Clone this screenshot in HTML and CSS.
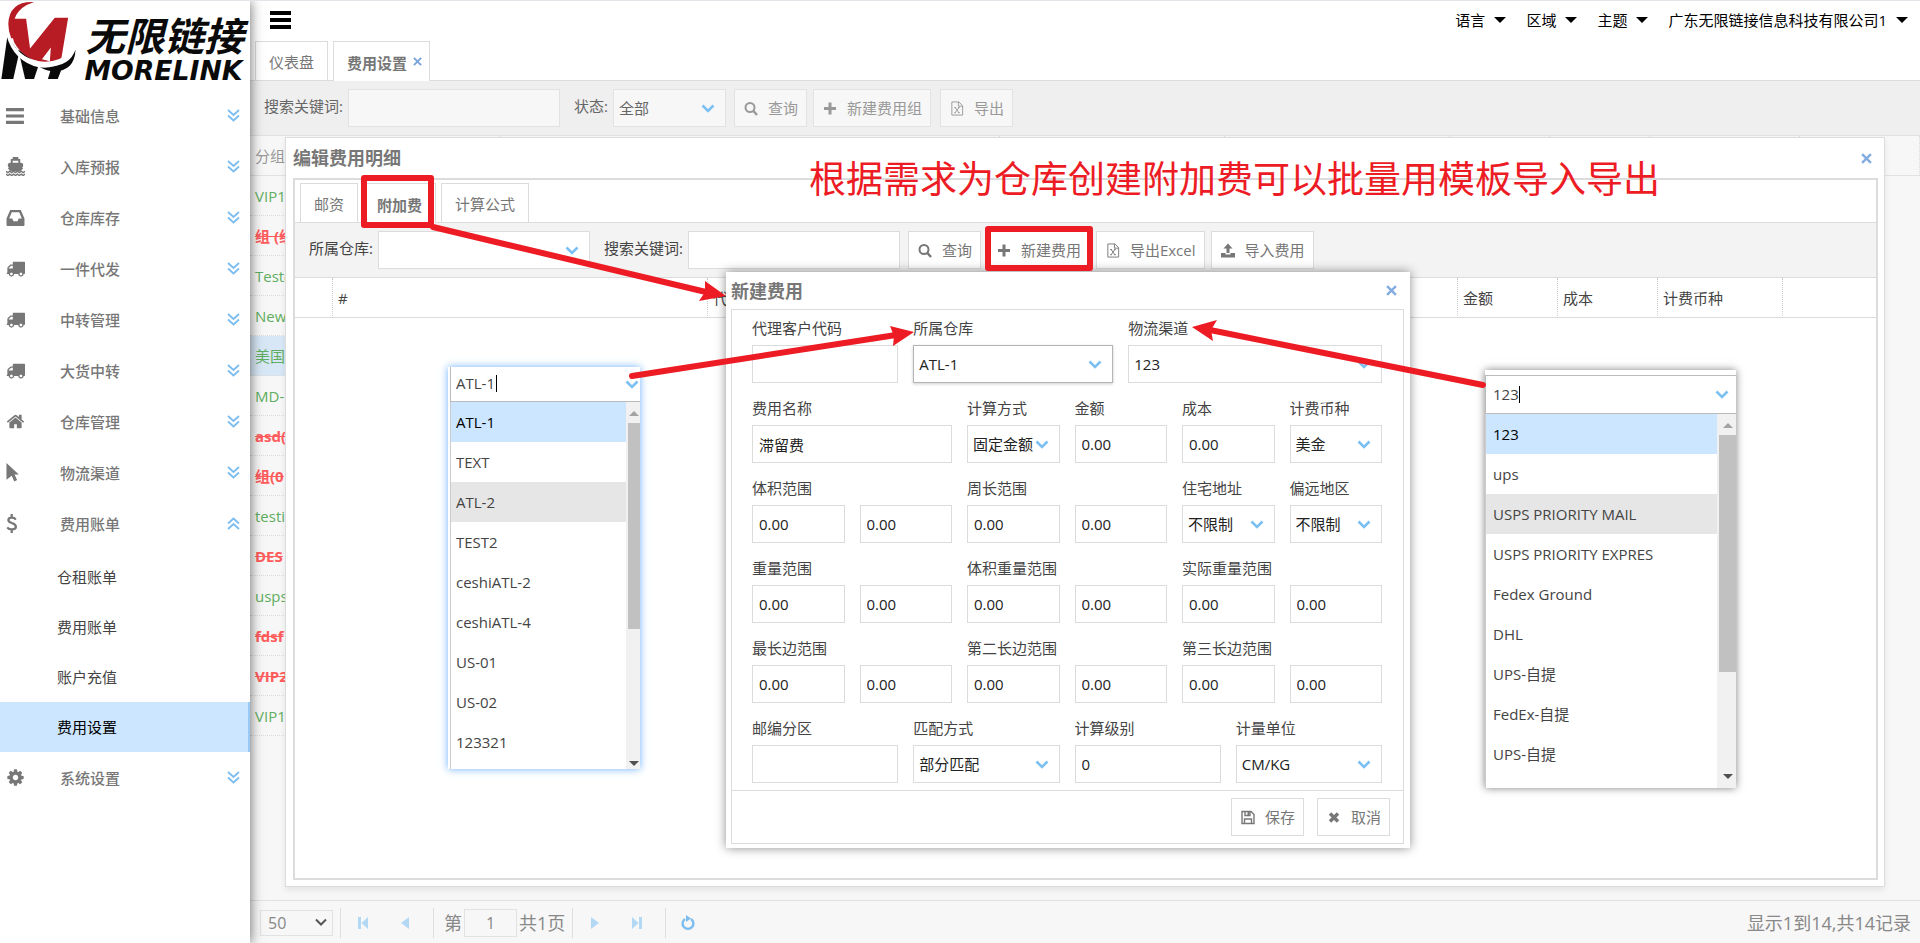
FILE: index.html
```html
<!DOCTYPE html>
<html lang="zh-CN">
<head>
    <meta charset="UTF-8">
    <meta name="viewport" content="width=device-width, initial-scale=1.0">
    <title>费用设置</title>
    <link rel="stylesheet" href="styles.css">
</head>
<body>
    <!-- Icon set -->
    <svg class="sprite" aria-hidden="true">
        <symbol id="i-bars" viewBox="0 0 18 18"><path d="M0 2h17v3H0zM0 8h17v3H0zM0 14h17v3H0z"/></symbol>
        <symbol id="i-ship" viewBox="0 0 20 20"><path d="M7 2V0h6v2h2v4h1l2 1v3l-1 1 1 1-3 3H5l-3-3 1-1-1-1V7l2-1h1V2zm0 2v2h6V4z"/><path d="M0 15l2 1.500 2-1.500 2 1.500 2-1.500 2 1.500 2-1.500 2 1.500 2-1.500 2 1.500 2-1.500M0 18l2 1.500 2-1.500 2 1.500 2-1.500 2 1.500 2-1.500 2 1.500 2-1.500 2 1.500 2-1.500" fill="none" stroke="currentColor" stroke-width="1.500"/></symbol>
        <symbol id="i-inbox" viewBox="0 0 18 18"><path fill-rule="evenodd" d="M4 2h10l3.500 8v6q0 1-1 1h-15q-1 0-1-1v-6zm1.500 2L3 10h3l1 2.500h4l1-2.500h3l-2.500-6z"/></symbol>
        <symbol id="i-truck" viewBox="0 0 1792 1792"><path d="M640 1408q0-52-38-90t-90-38-90 38-38 90 38 90 90 38 90-38 38-90zm-384-512h384v-256h-158q-13 0-22 9l-195 195q-9 9-9 22v30zm1280 512q0-52-38-90t-90-38-90 38-38 90 38 90 90 38 90-38 38-90zm256-1088v1024q0 15-4 26.500t-13.500 18.500-16.500 11.500-23.500 6-22.500 2-25.500 0-22.500-.5q0 106-75 181t-181 75-181-75-75-181h-384q0 106-75 181t-181 75-181-75-75-181h-64q-3 0-22.500.5t-25.500 0-22.500-2-23.500-6-16.500-11.500-13.500-18.500-4-26.500q0-26 19-45t45-19v-320q0-8-.5-35t0-38 2.500-34.500 6.500-37 14-30.500 22.500-30l198-198q19-19 50.500-32t58.500-13h160v-192q0-26 19-45t45-19h1024q26 0 45 19t19 45z"/></symbol>
        <symbol id="i-home" viewBox="0 0 1792 1792"><path d="M1472 992v480q0 26-19 45t-45 19h-384v-384h-256v384h-384q-26 0-45-19t-19-45v-480q0-1 .5-3t.5-3l575-474 575 474q1 2 1 6zm223-69l-62 74q-8 9-21 11h-3q-13 0-21-7l-692-577-692 577q-12 8-24 7-13-2-21-11l-62-74q-8-10-7-23.500t11-21.500l719-599q32-26 76-26t76 26l244 204v-195q0-14 9-23t23-9h192q14 0 23 9t9 23v408l219 182q10 8 11 21.500t-7 23.500z"/></symbol>
        <symbol id="i-pointer" viewBox="0 0 19 20"><path d="M0 0l13 12H8.500l2.700 6-3 1.500-2.700-6.200L0 17.500z"/></symbol>
        <symbol id="i-dollar" viewBox="0 0 19 20"><path d="M9.800 5.800Q8.500 3.800 5.600 3.800 2 3.800 2 6.300q0 2 3.600 3.200 4.300 1.300 4.300 3.900 0 2.800-4.300 2.800-3.300 0-4.800-2.200M5.500 0v4M5.500 16v4" fill="none" stroke="currentColor" stroke-width="2.400"/></symbol>
        <symbol id="i-cog" viewBox="0 0 1792 1792"><path d="M1152 896q0-106-75-181t-181-75-181 75-75 181 75 181 181 75 181-75 75-181zm512-109v222q0 12-8 23t-20 13l-185 28q-19 54-39 91 35 50 107 138 10 12 10 25t-9 23q-27 37-99 108t-94 71q-12 0-26-9l-138-108q-44 23-91 38-16 136-29 186-7 28-36 28h-222q-14 0-24.500-8.500t-11.500-21.500l-28-184q-49-16-90-37l-141 107q-10 9-25 9-14 0-25-11-126-114-165-168-7-10-7-23 0-12 8-23 15-21 51-66.500t54-70.500q-27-50-41-99l-183-27q-13-2-21-12.500t-8-23.500v-222q0-12 8-23t19-13l186-28q14-46 39-92-40-57-107-138-10-12-10-24 0-10 9-23 26-36 98.500-107.500t94.500-71.500q13 0 26 10l138 107q44-23 91-38 16-136 29-186 7-28 36-28h222q14 0 24.500 8.500t11.500 21.500l28 184q49 16 90 37l142-107q9-9 24-9 13 0 25 10 129 119 165 170 7 8 7 22 0 12-8 23-15 21-51 66.500t-54 70.500q26 50 41 98l183 28q13 2 21 12.500t8 23.500z"/></symbol>
        <symbol id="i-more" viewBox="0 0 13 13"><path d="M1 1l5.500 5L12 1M1 6.500l5.500 5 5.500-5" fill="none" stroke="currentColor" stroke-width="1.800"/></symbol>
        <symbol id="i-x" viewBox="0 0 10 10"><path d="M1 1l8 8M9 1L1 9" fill="none" stroke="currentColor" stroke-width="2.200"/></symbol>
        <symbol id="i-cross" viewBox="0 0 14 14"><path d="M3 3l8 8M11 3l-8 8" fill="none" stroke="currentColor" stroke-width="3.400"/></symbol>
        <symbol id="i-search" viewBox="0 0 14 14"><circle cx="6" cy="6" r="4.500" fill="none" stroke="currentColor" stroke-width="2"/><path d="M9 9l4 4.500" stroke="currentColor" stroke-width="2.400"/></symbol>
        <symbol id="i-plus" viewBox="0 0 14 14"><path d="M5.500 1h3v4.500H13v3H8.500V13h-3V8.500H1v-3h4.500z"/></symbol>
        <symbol id="i-excel" viewBox="0 0 14 16"><path d="M1.500 1h7.500l4 4v10H1.500zM8.500 1v4.500H13M5 7l4 5.500M9 7l-4 5.500M4 7h2M8 7h2M4 12.500h2M8 12.500h2" fill="none" stroke="currentColor"/></symbol>
        <symbol id="i-upload" viewBox="0 0 14 14"><path d="M7 0l4.500 5H8.500v4.500h-3V5h-3zM0 9.500h4.500v1.500h5V9.500H14V14H0z"/></symbol>
        <symbol id="i-save" viewBox="0 0 14 14"><path d="M1 1h9l3 3v9H1zM4 1v4h5V1M3.500 13V8.500h7V13" fill="none" stroke="currentColor" stroke-width="1.400"/><path d="M6.500 1.500h2v3h-2z"/></symbol>
        <symbol id="i-first" viewBox="0 0 12 14"><path d="M1 1h3v12H1zM11 1v12L4.500 7z"/></symbol>
        <symbol id="i-prev" viewBox="0 0 12 14"><path d="M10 1v12L2 7z"/></symbol>
        <symbol id="i-next" viewBox="0 0 12 14"><path d="M2 1v12l8-6z"/></symbol>
        <symbol id="i-last" viewBox="0 0 12 14"><path d="M8 1h3v12H8zM1 1v12l6.500-6z"/></symbol>
        <symbol id="i-reload" viewBox="0 0 16 16"><path d="M5 4a5.400 5.400 0 1 0 6 0" fill="none" stroke="currentColor" stroke-width="2.400"/><path d="M6 0l5 3.500L6 7z"/></symbol>
    </svg>

    <aside class="sidebar">
        <svg class="logo" viewBox="0 0 250 90" role="img" aria-label="MORELINK">
            <path d="M6 36l12 16-6 27H0z" fill="#0a0a0a"/>
            <path d="M17 49l21 15-5 15H24z" fill="#0a0a0a"/>
            <path d="M51 66h11l-5 13H47z" fill="#0a0a0a"/>
            <path d="M36 65q32 5 39-16-1 23-24 22-8-1-15-6z" fill="#0a0a0a"/>
            <path d="M11 18h14l4 30L54 17h13.500L60 62q-34 4-47-20-4-10-2-24z" fill="#b71c25"/>
            <path d="M6 34q9 24 32 28 20 3 36-13-14 20-36 17Q13 60 6 34z" fill="#fff" stroke="#fff" stroke-width="2"/>
            <path d="M41 59l9-12-1 14z" fill="#fff"/>
            <path d="M33 1Q8 0 7 23q0 8 3 15l4-1Q6 10 33 1z" fill="#b71c25"/>
            <text class="logo-cn" x="85" y="51">无限链接</text>
            <text class="logo-en" x="84" y="80">MORELINK</text>
        </svg>
        <nav class="menu">
            <a href="#" class="menu-item"><svg><use href="#i-bars"/></svg><span>基础信息</span><svg class="more"><use href="#i-more"/></svg></a>
            <a href="#" class="menu-item"><svg><use href="#i-ship"/></svg><span>入库预报</span><svg class="more"><use href="#i-more"/></svg></a>
            <a href="#" class="menu-item"><svg><use href="#i-inbox"/></svg><span>仓库库存</span><svg class="more"><use href="#i-more"/></svg></a>
            <a href="#" class="menu-item"><svg><use href="#i-truck"/></svg><span>一件代发</span><svg class="more"><use href="#i-more"/></svg></a>
            <a href="#" class="menu-item"><svg><use href="#i-truck"/></svg><span>中转管理</span><svg class="more"><use href="#i-more"/></svg></a>
            <a href="#" class="menu-item"><svg><use href="#i-truck"/></svg><span>大货中转</span><svg class="more"><use href="#i-more"/></svg></a>
            <a href="#" class="menu-item"><svg><use href="#i-home"/></svg><span>仓库管理</span><svg class="more"><use href="#i-more"/></svg></a>
            <a href="#" class="menu-item"><svg><use href="#i-pointer"/></svg><span>物流渠道</span><svg class="more"><use href="#i-more"/></svg></a>
            <a href="#" class="menu-item open"><svg><use href="#i-dollar"/></svg><span>费用账单</span><svg class="more"><use href="#i-more"/></svg></a>
            <div class="submenu">
                <a href="#">仓租账单</a>
                <a href="#">费用账单</a>
                <a href="#">账户充值</a>
                <a href="#" class="active">费用设置</a>
            </div>
            <a href="#" class="menu-item"><svg><use href="#i-cog"/></svg><span>系统设置</span><svg class="more"><use href="#i-more"/></svg></a>
        </nav>
    </aside>

    <main class="main">
        <header class="topbar">
            <button class="burger" aria-label="菜单"></button>
            <button class="top-menu">语言</button>
            <button class="top-menu">区域</button>
            <button class="top-menu">主题</button>
            <button class="top-menu">广东无限链接信息科技有限公司1</button>
        </header>
        <div class="tabs">
            <button class="tab">仪表盘</button>
            <button class="tab active closable">费用设置<svg><use href="#i-x"/></svg></button>
        </div>
        <div class="toolbar dim">
            <label for="keyword">搜索关键词:</label>
            <input type="text" id="keyword" class="wide">
            <label for="status" class="next">状态:</label>
            <select id="status" class="short"><option>全部</option></select>
            <button class="btn"><svg><use href="#i-search"/></svg>查询</button>
            <button class="btn"><svg><use href="#i-plus"/></svg>新建费用组</button>
            <button class="btn gap"><svg><use href="#i-excel"/></svg>导出</button>
        </div>
        <div class="grid-area">
            <table class="groups">
                <colgroup><col class="c250"><col class="c500"><col class="c225"><col class="c225"><col class="c100"><col class="c100"><col class="c150"><col></colgroup>
                <thead>
                    <tr><th>分组</th><th></th><th></th><th></th><th></th><th></th><th></th><th></th></tr>
                </thead>
                <tbody>
                    <tr><td colspan="7">VIP1</td></tr>
                    <tr class="off"><td colspan="7">组 (组)</td></tr>
                    <tr><td colspan="7">Test(</td></tr>
                    <tr><td colspan="7">New</td></tr>
                    <tr class="selected"><td colspan="7">美国</td></tr>
                    <tr><td colspan="7">MD-</td></tr>
                    <tr class="off"><td colspan="7">asd(</td></tr>
                    <tr class="off"><td colspan="7">组(0</td></tr>
                    <tr><td colspan="7">testi</td></tr>
                    <tr class="off"><td colspan="7">DES</td></tr>
                    <tr><td colspan="7">usps</td></tr>
                    <tr class="off"><td colspan="7">fdsf</td></tr>
                    <tr class="off"><td colspan="7">VIP2</td></tr>
                    <tr><td colspan="7">VIP1</td></tr>
                </tbody>
            </table>
        </div>
        <footer class="pager">
            <select class="page-size" aria-label="每页条数"><option>50</option></select>
            <i class="sep"></i>
            <button aria-label="第一页"><svg><use href="#i-first"/></svg></button>
            <button aria-label="上一页"><svg><use href="#i-prev"/></svg></button>
            <i class="sep"></i>
            <label for="page">第</label>
            <input type="text" id="page" value="1">
            <span>共1页</span>
            <i class="sep"></i>
            <button aria-label="下一页"><svg><use href="#i-next"/></svg></button>
            <button aria-label="最后一页"><svg><use href="#i-last"/></svg></button>
            <i class="sep"></i>
            <button class="reload" aria-label="刷新"><svg><use href="#i-reload"/></svg></button>
            <span class="total">显示1到14,共14记录</span>
        </footer>
    </main>

    <!-- Edit window -->
    <section class="window detail">
        <div class="window-title"><h2>编辑费用明细</h2><button class="close" aria-label="关闭"><svg><use href="#i-x"/></svg></button></div>
        <div class="detail-body">
            <div class="tabs">
                <button class="tab">邮资</button>
                <button class="tab active">附加费</button>
                <button class="tab">计算公式</button>
            </div>
            <div class="toolbar">
                <label for="warehouse">所属仓库:</label>
                <select id="warehouse" class="wide"><option></option></select>
                <label for="keyword2" class="next">搜索关键词:</label>
                <input type="text" id="keyword2" class="wide">
                <button class="btn"><svg><use href="#i-search"/></svg>查询</button>
                <button class="btn"><svg><use href="#i-plus"/></svg>新建费用</button>
                <button class="btn"><svg><use href="#i-excel"/></svg>导出Excel</button>
                <button class="btn"><svg><use href="#i-upload"/></svg>导入费用</button>
            </div>
            <table class="fees">
                <colgroup><col class="c38"><col class="c375"><col class="c750"><col class="c100"><col class="c100"><col class="c125"><col></colgroup>
                <thead>
                    <tr><th></th><th>#</th><th>代</th><th>金额</th><th>成本</th><th>计费币种</th><th></th></tr>
                </thead>
            </table>
        </div>
    </section>

    <!-- New fee window -->
    <section class="window dialog">
        <div class="window-title"><h2>新建费用</h2><button class="close" aria-label="关闭"><svg><use href="#i-x"/></svg></button></div>
        <form class="dialog-body">
            <div class="fields">
                <div class="field s6"><label for="f1">代理客户代码</label><input type="text" id="f1"></div>
                <div class="field s8 focused"><label for="f2">所属仓库</label><select id="f2"><option>ATL-1</option></select></div>
                <div class="field s10"><label for="f3">物流渠道</label><select id="f3"><option>123</option></select></div>

                <div class="field s8"><label for="f4">费用名称</label><input type="text" id="f4" value="滞留费"></div>
                <div class="field"><label for="f5">计算方式</label><select id="f5"><option>固定金额</option></select></div>
                <div class="field"><label for="f6">金额</label><input type="text" id="f6" value="0.00"></div>
                <div class="field"><label for="f7">成本</label><input type="text" id="f7" value="0.00"></div>
                <div class="field"><label for="f8">计费币种</label><select id="f8"><option>美金</option></select></div>

                <div class="field"><label for="f9">体积范围</label><input type="text" id="f9" value="0.00"></div>
                <div class="field"><input type="text" value="0.00" aria-label="体积上限"></div>
                <div class="field"><label for="f10">周长范围</label><input type="text" id="f10" value="0.00"></div>
                <div class="field"><input type="text" value="0.00" aria-label="周长上限"></div>
                <div class="field"><label for="f11">住宅地址</label><select id="f11"><option>不限制</option></select></div>
                <div class="field"><label for="f12">偏远地区</label><select id="f12"><option>不限制</option></select></div>

                <div class="field"><label for="f13">重量范围</label><input type="text" id="f13" value="0.00"></div>
                <div class="field"><input type="text" value="0.00" aria-label="重量上限"></div>
                <div class="field"><label for="f14">体积重量范围</label><input type="text" id="f14" value="0.00"></div>
                <div class="field"><input type="text" value="0.00" aria-label="体积重量上限"></div>
                <div class="field"><label for="f15">实际重量范围</label><input type="text" id="f15" value="0.00"></div>
                <div class="field"><input type="text" value="0.00" aria-label="实际重量上限"></div>

                <div class="field"><label for="f16">最长边范围</label><input type="text" id="f16" value="0.00"></div>
                <div class="field"><input type="text" value="0.00" aria-label="最长边上限"></div>
                <div class="field"><label for="f17">第二长边范围</label><input type="text" id="f17" value="0.00"></div>
                <div class="field"><input type="text" value="0.00" aria-label="第二长边上限"></div>
                <div class="field"><label for="f18">第三长边范围</label><input type="text" id="f18" value="0.00"></div>
                <div class="field"><input type="text" value="0.00" aria-label="第三长边上限"></div>

                <div class="field s6"><label for="f19">邮编分区</label><input type="text" id="f19"></div>
                <div class="field s6"><label for="f20">匹配方式</label><select id="f20"><option>部分匹配</option></select></div>
                <div class="field s6"><label for="f21">计算级别</label><input type="text" id="f21" value="0"></div>
                <div class="field s6"><label for="f22">计量单位</label><select id="f22"><option>CM/KG</option></select></div>
            </div>
            <div class="dialog-foot">
                <button type="button" class="btn"><svg><use href="#i-save"/></svg>保存</button>
                <button type="button" class="btn"><svg><use href="#i-cross"/></svg>取消</button>
            </div>
        </form>
    </section>

    <!-- Open lists -->
    <div class="popup popup-warehouse">
        <div class="popup-input"><input type="text" value="ATL-1" aria-label="所属仓库"><i class="caret"></i></div>
        <div class="popup-list">
            <ul>
                <li class="selected">ATL-1</li>
                <li>TEXT</li>
                <li class="hover">ATL-2</li>
                <li>TEST2</li>
                <li>ceshiATL-2</li>
                <li>ceshiATL-4</li>
                <li>US-01</li>
                <li>US-02</li>
                <li>123321</li>
            </ul>
            <div class="scroll"><i class="up"></i><i class="thumb"></i><i class="down"></i></div>
        </div>
    </div>
    <div class="popup popup-channel">
        <div class="popup-input"><input type="text" value="123" aria-label="物流渠道"><i class="caret"></i></div>
        <div class="popup-list">
            <ul>
                <li class="selected">123</li>
                <li>ups</li>
                <li class="hover">USPS PRIORITY MAIL</li>
                <li>USPS PRIORITY EXPRES</li>
                <li>Fedex Ground</li>
                <li>DHL</li>
                <li>UPS-自提</li>
                <li>FedEx-自提</li>
                <li>UPS-自提</li>
            </ul>
            <div class="scroll"><i class="up"></i><i class="thumb"></i><i class="down"></i></div>
        </div>
    </div>

    <!-- Notes drawn over the page -->
    <svg class="notes" width="1920" height="943">
        <g fill="none" stroke="#ed1c24" stroke-width="6" stroke-linejoin="round" stroke-linecap="round">
            <rect x="364" y="178" width="67" height="47"/>
            <rect x="988" y="229" width="102" height="39"/>
            <path d="M433 227L706 292M632 376L896 335M1483 385L1210 330"/>
        </g>
        <g fill="#ed1c24">
            <path d="M705 281l21 15-27 5 6-9z"/>
            <path d="M890 326l24 6-21 14 1-10z"/>
            <path d="M1192 327l25-7-6 10 2 11z"/>
        </g>
    </svg>
    <p class="caption">根据需求为仓库创建附加费可以批量用模板导入导出</p>
</body>
</html>
```
FILE: styles.css
```css
* {
    box-sizing: border-box;
}

body {
    margin: 0;
    height: 100vh;
    display: flex;
    position: relative;
    overflow: hidden;
    border-top: 1px solid #e1e5ea;
    background: #fff;
    color: #444;
    font: 15px/20px "Open Sans", "Noto Sans CJK SC", sans-serif;
}

a {
    color: inherit;
    text-decoration: none;
}

button, input, select {
    margin: 0;
    font: inherit;
    color: inherit;
}

button {
    padding: 0;
    border: 0;
    background: none;
    cursor: pointer;
}

svg {
    fill: currentColor;
    flex: none;
}

.sprite {
    position: absolute;
    width: 0;
    height: 0;
}

/* Sidebar */
.sidebar {
    width: 250px;
    flex: none;
    position: relative;
    z-index: 1;
    background: #fff;
    box-shadow: 0 0 12px rgba(0, 0, 0, 0.6);
}

.logo {
    display: block;
    width: 250px;
    height: 89px;
}

.logo-cn {
    font: italic bold 40px "Noto Sans CJK SC", sans-serif;
    fill: #0a0a0a;
}

.logo-en {
    font: italic bold 27px "DejaVu Sans", sans-serif;
    fill: #0a0a0a;
}

.menu-item {
    display: flex;
    align-items: center;
    height: 51px;
    padding: 0 10px 0 6px;
    color: #777;
    font-weight: 500;
}

.menu-item svg {
    width: 19px;
    height: 19px;
}

.menu-item span {
    flex: 1;
    margin-left: 35px;
}

.menu-item .more {
    width: 13px;
    height: 13px;
    color: #7cbdf0;
}

.menu-item.open .more {
    transform: rotate(180deg);
}

.submenu {
    padding-top: 3px;
}

.submenu a {
    display: block;
    height: 50px;
    padding-left: 57px;
    line-height: 50px;
}

.submenu .active {
    background: #cce6ff;
    border-right: 2px solid #99c9f7;
    color: #000;
}

/* Main column */
.main {
    flex: 1;
    min-width: 0;
    display: flex;
    flex-direction: column;
    background: #f7f7f7;
}

.topbar {
    display: flex;
    align-items: center;
    gap: 20px;
    height: 40px;
    padding: 0 12px 3px 20px;
    background: #fff;
    color: #000;
}

.burger {
    width: 21px;
    height: 18px;
    margin-right: auto;
    border-top: 4px solid #000;
    border-bottom: 4px solid #000;
    background: linear-gradient(#000, #000) center / 100% 4px no-repeat;
}

.top-menu {
    display: flex;
    align-items: center;
    gap: 9px;
}

.top-menu::after {
    content: "";
    border: 6px solid transparent;
    border-top-color: #000;
    border-bottom: 0;
}

.tabs {
    display: flex;
    gap: 5px;
    height: 40px;
    padding: 0 5px;
    background: #fff;
    border-bottom: 1px solid #dcdcdc;
}

.tab {
    display: flex;
    align-items: center;
    height: 39px;
    padding: 2px 13px 0;
    border: 1px solid #dcdcdc;
    border-bottom: 0;
    background: #fff;
    color: #777;
}

.tab.active {
    height: 40px;
    font-weight: 600;
}

.tab.closable {
    padding-right: 7px;
}

.tab svg {
    width: 9px;
    height: 9px;
    margin: 0 0 2px 6px;
    color: #7ba4db;
}

.toolbar {
    display: flex;
    align-items: center;
    gap: 5px;
    height: 55px;
    padding: 0 14px;
    background: #f3f3f3;
    border-bottom: 1px solid #dcdcdc;
}

.toolbar .next {
    margin-left: 9px;
}

.toolbar label {
    padding-bottom: 4px;
}

input, select {
    height: 38px;
    padding: 0 7px;
    border: 1px solid #dcdcdc;
    border-radius: 0;
    outline: 0;
    background-color: #fff;
}

select {
    appearance: none;
    padding-right: 16px;
    background-image: url("data:image/svg+xml,%3Csvg xmlns='http://www.w3.org/2000/svg' width='14' height='9'%3E%3Cpath d='M1.500 1.500L7 7l5.500-5.500' fill='none' stroke='%237cc0f2' stroke-width='2.600'/%3E%3C/svg%3E");
    background-repeat: no-repeat;
    background-position: right 10px center;
}

.wide {
    width: 212px;
}

.short {
    width: 113px;
    padding-left: 5px;
}

.btn {
    display: flex;
    align-items: center;
    gap: 10px;
    height: 38px;
    padding: 0 8px 0 9px;
    border: 1px solid #dcdcdc;
    background: #fff;
    color: #777;
}

.btn svg {
    width: 14px;
    height: 15px;
}

.toolbar select + .btn, .toolbar input + .btn {
    margin-left: 3px;
}

.btn + .btn {
    margin-left: 1px;
}

.btn.gap {
    margin-left: 4px;
}

.dim {
    background: #efefef;
    border-color: #e2e2e2;
    color: #666;
}

.dim input, .dim select, .dim .btn {
    background-color: #f7f7f7;
    border-color: #e2e2e2;
}

.dim .btn {
    color: #999;
}

.grid-area {
    flex: 1;
    min-height: 0;
    overflow: hidden;
}

table {
    width: 100%;
    table-layout: fixed;
    border-collapse: separate;
    border-spacing: 0;
}

th, td {
    height: 40px;
    padding: 0 5px;
    text-align: left;
    font-weight: normal;
    white-space: nowrap;
}

.groups th {
    border-bottom: 1px solid #e2e2e2;
    border-right: 1px dotted #dcdcdc;
    color: #999;
}

.groups td {
    border-bottom: 1px dotted #dcdcdc;
    color: #5fae60;
}

.groups .off td {
    color: #ff5c5c;
    font-weight: bold;
    text-decoration: line-through;
}

.groups .selected td {
    background: #d8e7f6;
}

.c38 { width: 38px; }
.c100 { width: 100px; }
.c125 { width: 125px; }
.c150 { width: 150px; }
.c225 { width: 225px; }
.c250 { width: 250px; }
.c375 { width: 375px; }
.c500 { width: 500px; }
.c750 { width: 750px; }

/* Pager */
.pager {
    display: flex;
    align-items: center;
    height: 43px;
    padding: 1px 9px 0 10px;
    border-top: 1px solid #e2e2e2;
    color: #888;
    font-size: 18px;
}

.pager select, .pager input {
    height: 26px;
    background-color: #f7f7f7;
    border-color: #e2e2e2;
    font-size: 16px;
}

.pager .page-size {
    width: 73px;
    background-image: url("data:image/svg+xml,%3Csvg xmlns='http://www.w3.org/2000/svg' width='12' height='9'%3E%3Cpath d='M1 1.500L6 6.500l5-5' fill='none' stroke='%23555' stroke-width='2'/%3E%3C/svg%3E");
    background-position: right 5px center;
}

.pager input {
    width: 53px;
    height: 28px;
    margin: 0 2px;
    text-align: center;
}

.sep {
    width: 1px;
    height: 30px;
    margin: 0 1px 0 7px;
    background: #dedede;
}

.pager label {
    margin-left: 9px;
}

.pager button {
    width: 42px;
    height: 30px;
    color: #b3d8f4;
}

.pager button svg {
    display: block;
    width: 12px;
    height: 14px;
    margin: auto;
}

.pager .reload {
    color: #7cbdf0;
}

.pager .reload svg {
    width: 16px;
    height: 16px;
}

.total {
    margin-left: auto;
}

/* Windows */
.window {
    position: absolute;
    display: flex;
    flex-direction: column;
    background: #fff;
}

.window-title {
    display: flex;
    align-items: center;
    justify-content: space-between;
}

.window-title h2 {
    margin: 0;
    color: #777;
    font-size: 18px;
    font-weight: bold;
}

.close svg {
    display: block;
    width: 11px;
    height: 11px;
    color: #85ace0;
}

.detail {
    inset: 136px 35px 56px 285px;
    padding: 0 6px 6px 7px;
    border: 1px solid #dcdcdc;
    box-shadow: 0 3px 6px rgba(0, 0, 0, 0.08);
}

.detail .window-title {
    height: 40px;
    padding-right: 6px;
}

.detail-body {
    flex: 1;
    padding: 3px 0 0;
    border: 2px solid #dcdcdc;
}

.fees th {
    border-right: 1px dotted #ccc;
    border-bottom: 1px solid #dcdcdc;
}

.fees th:last-child {
    border-right: 0;
}

.dialog {
    top: 271px;
    left: 726px;
    width: 684px;
    padding: 0 6px 4px 5px;
    box-shadow: 0 0 10px rgba(0, 0, 0, 0.45);
}

.dialog .window-title {
    height: 37px;
    padding-right: 7px;
}

.dialog-body {
    border: 1px solid #dcdcdc;
}

.fields {
    display: grid;
    grid-template-columns: repeat(24, 1fr);
    column-gap: 15px;
    row-gap: 7px;
    padding: 0 21px 7px 20px;
}

.field {
    grid-column: span 4;
    min-width: 0;
    display: flex;
    flex-direction: column;
    justify-content: flex-end;
}

.s6 { grid-column: span 6; }
.s8 { grid-column: span 8; }
.s10 { grid-column: span 10; }

.field label {
    height: 35px;
    line-height: 36px;
    white-space: nowrap;
}

.field input, .field select {
    width: 100%;
    padding-left: 6px;
    color: #222;
}

.field select {
    padding-left: 5px;
}

.focused select {
    border-color: #b5b5b5;
    box-shadow: 0 1px 3px rgba(0, 0, 0, 0.2);
}

.dialog-foot {
    display: flex;
    justify-content: flex-end;
    gap: 12px;
    padding: 7px 13px;
    border-top: 1px solid #dcdcdc;
}

/* Open lists */
.popup {
    position: absolute;
    display: flex;
    flex-direction: column;
    overflow: hidden;
    background: #fff;
}

.popup-warehouse {
    top: 366px;
    left: 448px;
    width: 192px;
    height: 402px;
    padding-left: 2px;
    box-shadow: 0 0 8px #6cb0ff;
}

.popup-channel {
    top: 369px;
    left: 1485px;
    width: 251px;
    height: 418px;
    padding-top: 5px;
    box-shadow: 0 0 8px rgba(0, 0, 0, 0.5);
}

.popup-input {
    position: relative;
}

.popup-input input {
    display: block;
    width: 100%;
    height: 35px;
    padding: 0 5px 2px;
    border-color: #bbb;
    border-width: 0 0 1px 1px;
    background: url("data:image/svg+xml,%3Csvg xmlns='http://www.w3.org/2000/svg' width='14' height='9'%3E%3Cpath d='M1.500 1.500L7 7l5.500-5.500' fill='none' stroke='%237cc0f2' stroke-width='2.600'/%3E%3C/svg%3E") no-repeat right 1px center;
}

.popup-channel input {
    height: 39px;
    padding-left: 7px;
    border-top-width: 1px;
    background-position: right 7px center;
}

.caret {
    position: absolute;
    top: 8px;
    left: 46px;
    width: 1px;
    height: 17px;
    background: #000;
}

.popup-channel .caret {
    top: 11px;
    left: 34px;
}

.popup-list {
    flex: 1;
    display: flex;
    border-left: 1px solid #ccc;
}

.popup-list ul {
    flex: 1;
    margin: 0;
    padding: 0;
    list-style: none;
}

.popup-list li {
    height: 40px;
    padding-left: 5px;
    line-height: 41px;
}

.popup-channel li {
    padding-left: 7px;
}

.popup-list .selected {
    background: #cce6ff;
    color: #000;
}

.popup-list .hover {
    background: #e6e6e6;
}

.scroll {
    display: flex;
    flex-direction: column;
    align-items: center;
    width: 14px;
    padding: 9px 0 3px 2px;
    background: #f1f1f1;
}

.popup-channel .scroll {
    width: 19px;
    padding-bottom: 9px;
}

.up, .down {
    border: 5px solid transparent;
}

.up {
    border-top: 0;
    border-bottom-color: #a3a3a3;
}

.down {
    margin-top: auto;
    border-bottom: 0;
    border-top-color: #505050;
}

.thumb {
    width: 100%;
    height: 206px;
    margin-top: 7px;
    background: #c1c1c1;
}

.popup-channel .thumb {
    height: 237px;
}

/* Notes */
.notes {
    position: absolute;
    top: -1px;
    left: 0;
    pointer-events: none;
}

.caption {
    position: absolute;
    top: 150px;
    left: 809px;
    margin: 0;
    color: #ed1c24;
    font-size: 37px;
    line-height: 56px;
    white-space: nowrap;
}
```
